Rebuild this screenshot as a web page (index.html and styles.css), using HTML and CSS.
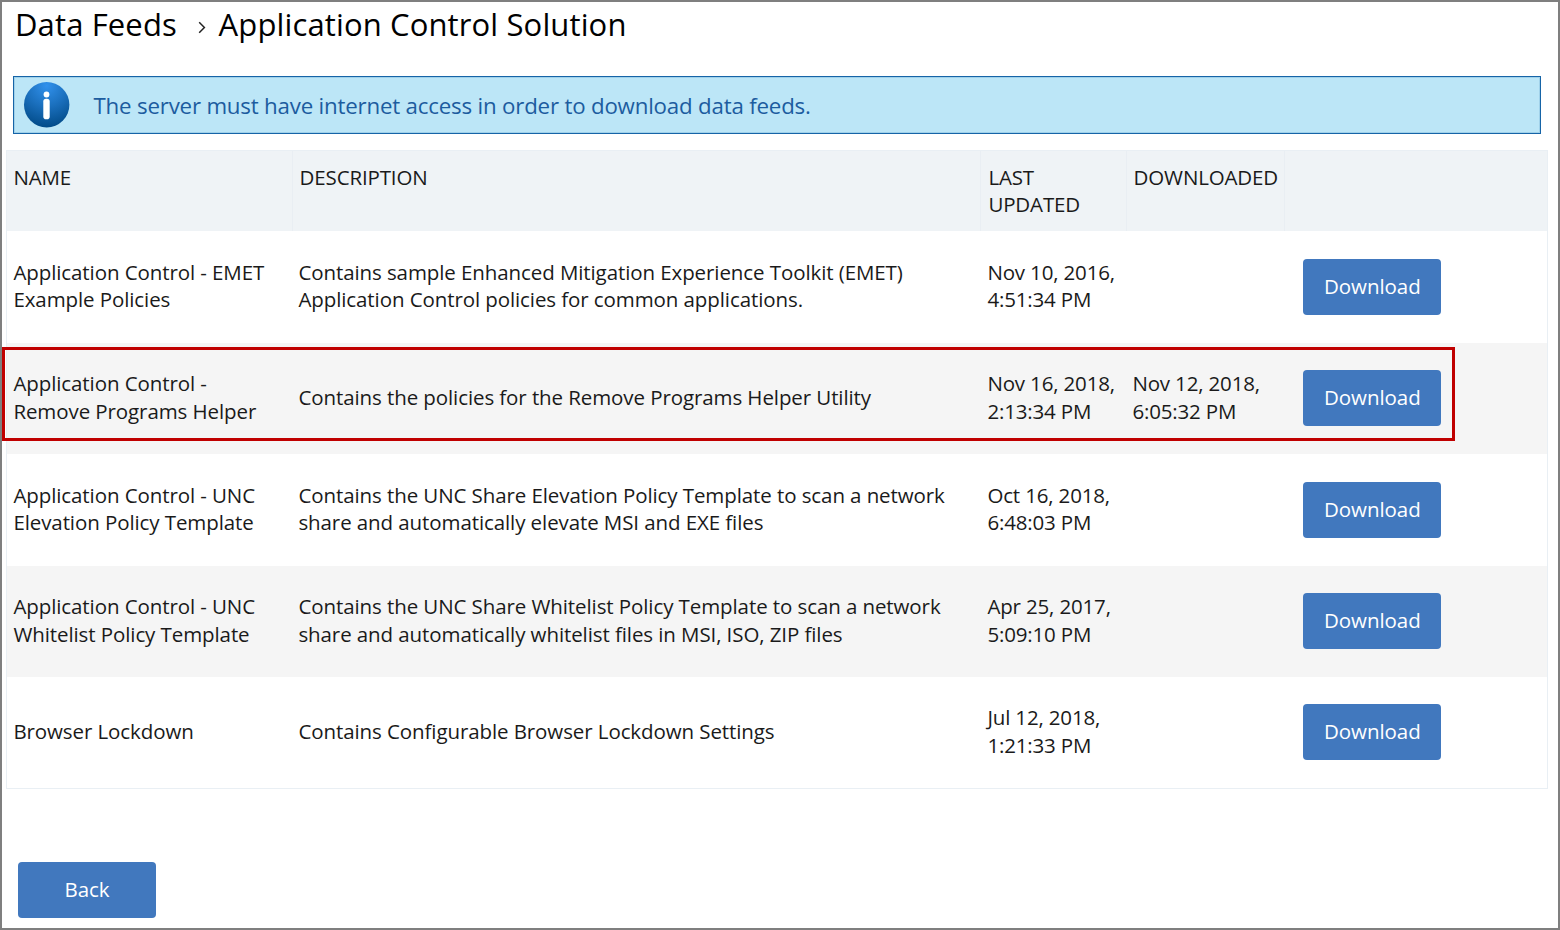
FILE: index.html
```html
<!DOCTYPE html>
<html lang="en">
<head>
<meta charset="utf-8">
<title>Data Feeds</title>
<link rel="stylesheet" href="styles.css">
</head>
<body>
<main class="page">
  <h1 class="breadcrumb">
    <span class="crumb-root">Data Feeds</span>
    <svg class="crumb-arrow" width="8" height="13" viewBox="0 0 8 13"><path d="M1.2 1.2 6.4 6.5 1.2 11.8" fill="none" stroke="#222" stroke-width="1.5"/></svg>
    <span class="crumb-current">Application Control Solution</span>
  </h1>
  <div class="notice">
    <svg class="notice-icon" width="48" height="48" viewBox="0 0 48 48">
      <defs><radialGradient id="info" cx="50%" cy="8%" r="90%"><stop offset="0" stop-color="#3191ec"/><stop offset="0.5" stop-color="#1b70be"/><stop offset="1" stop-color="#034d8b"/></radialGradient></defs>
      <circle cx="23.7" cy="23.7" r="22.7" fill="url(#info)"/>
      <circle cx="23.5" cy="13.5" r="2.9" fill="#fff"/>
      <rect x="20.3" y="17.7" width="6.4" height="20.5" rx="2.8" fill="#fff"/>
    </svg>
    <span class="notice-text">The server must have internet access in order to download data feeds.</span>
  </div>
  <div class="feeds">
    <div class="row head">
      <div class="cell">NAME</div><div class="cell">DESCRIPTION</div><div class="cell">LAST<br>UPDATED</div><div class="cell">DOWNLOADED</div><div class="cell"></div>
    </div>
    <div class="row">
      <div class="cell">Application Control - EMET<br>Example Policies</div>
      <div class="cell">Contains sample Enhanced Mitigation Experience Toolkit (EMET)<br>Application Control policies for common applications.</div>
      <div class="cell date">Nov 10, 2016,<br>4:51:34 PM</div><div class="cell date"></div>
      <div class="cell action"><button class="button">Download</button></div>
    </div>
    <div class="row alt">
      <div class="cell">Application Control -<br>Remove Programs Helper</div>
      <div class="cell">Contains the policies for the Remove Programs Helper Utility</div>
      <div class="cell date">Nov 16, 2018,<br>2:13:34 PM</div><div class="cell date">Nov 12, 2018,<br>6:05:32 PM</div>
      <div class="cell action"><button class="button">Download</button></div>
      <div class="highlight"></div>
    </div>
    <div class="row">
      <div class="cell">Application Control - UNC<br>Elevation Policy Template</div>
      <div class="cell">Contains the UNC Share Elevation Policy Template to scan a network<br>share and automatically elevate MSI and EXE files</div>
      <div class="cell date">Oct 16, 2018,<br>6:48:03 PM</div><div class="cell date"></div>
      <div class="cell action"><button class="button">Download</button></div>
    </div>
    <div class="row alt">
      <div class="cell">Application Control - UNC<br>Whitelist Policy Template</div>
      <div class="cell">Contains the UNC Share Whitelist Policy Template to scan a network<br>share and automatically whitelist files in MSI, ISO, ZIP files</div>
      <div class="cell date">Apr 25, 2017,<br>5:09:10 PM</div><div class="cell date"></div>
      <div class="cell action"><button class="button">Download</button></div>
    </div>
    <div class="row">
      <div class="cell">Browser Lockdown</div>
      <div class="cell">Contains Configurable Browser Lockdown Settings</div>
      <div class="cell date">Jul 12, 2018,<br>1:21:33 PM</div><div class="cell date"></div>
      <div class="cell action"><button class="button">Download</button></div>
    </div>
  </div>
  <button class="button back">Back</button>
</main>
</body>
</html>
```

FILE: styles.css
```css
* { box-sizing: border-box; }
body { margin: 0; background: #fff; color: #1a1a1a; font-family: "Open Sans", "Noto Sans", sans-serif; }
.page { width: 1560px; height: 930px; border: 2px solid #7f7f7f; padding: 0 10px 0 4px; overflow: hidden; }
.breadcrumb { display: flex; align-items: center; height: 46px; margin: 0 0 28px 9px; font-size: 31px; font-weight: 400; line-height: 44px; letter-spacing: 0.13px; color: #000; white-space: nowrap; }
.breadcrumb span { padding-bottom: 2px; }
.crumb-root { width: 182.6px; }
.crumb-arrow { margin: 4px 13px 0 0; }
.notice { display: flex; align-items: center; width: 1528px; height: 58px; margin: 0 0 16px 7px; padding-left: 9px; border: 1px solid #1664a7; background: #bce6f7; box-shadow: inset 0 0 0 1px #a0d1ea; }
.notice-text { margin: 0 0 0 22.5px; color: #1c5c9f; font-size: 22.3px; letter-spacing: -0.2px; white-space: nowrap; }
.feeds { width: 1542px; height: 639.4px; border: 1px solid #e9eff4; font-size: 20.5px; line-height: 27.6px; letter-spacing: -0.09px; }
.row { position: relative; display: grid; grid-template-columns: 285px 689px 145px 158px 1fr; align-items: center; height: 111.4px; }
.cell { padding: 0 0 1.2px 6.4px; white-space: nowrap; }
.date { letter-spacing: -0.16px; }
.head { grid-template-columns: 286px 688px 146px 158px 1fr; height: 80.4px; background: #eff3f6; align-items: stretch; letter-spacing: -0.15px; }
.head .cell { padding: 12.6px 0 0 6.6px; border-right: 1px solid #e9eef3; }
.head .cell:first-child { padding-left: 6.4px; }
.head .cell:nth-child(3) { padding-left: 7.4px; }
.head .cell:last-child { border-right: 0; }
.alt { background: #f5f5f5; }
.action { display: flex; padding: 0 0 0.4px 19.3px; }
.button { width: 138px; height: 56px; padding: 0 0 2px; border: 0; border-radius: 4px; background: #4178be; color: #fff; font: 400 20.5px/28px "Open Sans", "Noto Sans", sans-serif; letter-spacing: -0.05px; }
.back { display: block; margin: 72.6px 0 0 12px; }
.highlight { position: absolute; left: -5px; top: 4px; width: 1453px; height: 94px; border: 3px solid #c00000; }
```
